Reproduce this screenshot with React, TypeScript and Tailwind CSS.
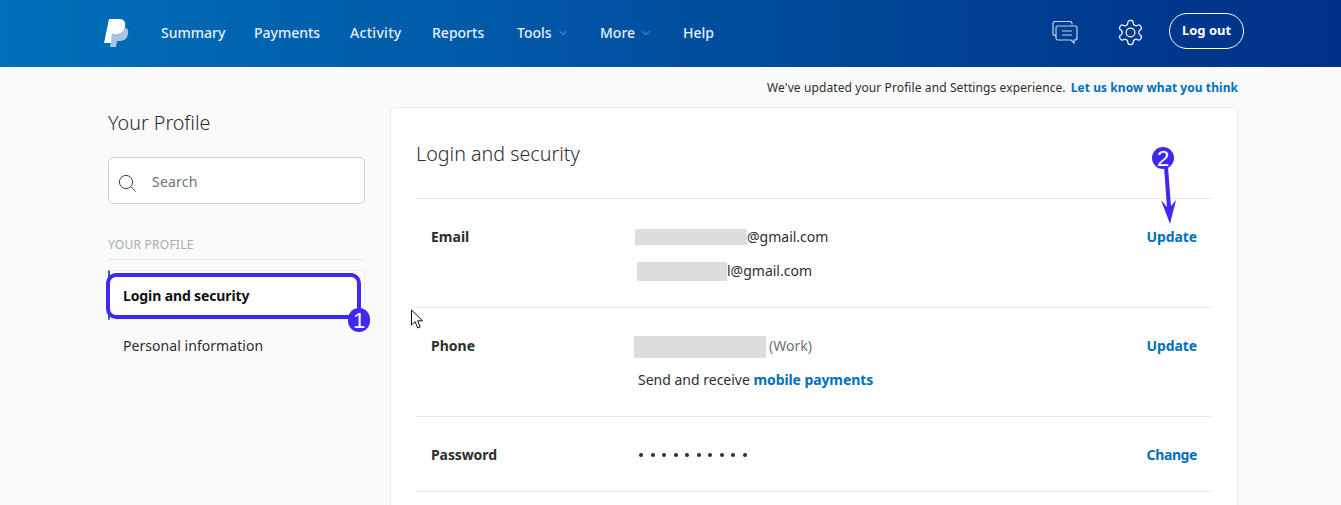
import { ChevronDown } from 'lucide-react';

const font = { fontFamily: '"Noto Sans", "Open Sans", sans-serif' };

function PayPalLogo() {
  return (
    <svg width="25" height="28" viewBox="0 0 25 28" className="shrink-0 mt-[1px]">
      <path d="M9 8h9c5 0 7 3 6 7-1 5-4 7-9 7h-2l-1 6H6z" fill="#a9c4ea" />
      <path d="M5 0h10c5 0 7 3 6 7-1 6-5 8-10 8H8l-1 9H0z" fill="#ffffff" />
    </svg>
  );
}

function NavItem({ label, width, menu, className }: { label: string; width: string; menu?: boolean; className?: string }) {
  return (
    <span className={`flex items-center whitespace-nowrap text-[14px] font-medium text-[#e6eef8] ${width} ${className ?? ''}`}>
      {label}
      {menu && <ChevronDown className="ml-[5px] w-[12px] h-[12px] text-[#a8c4e4]" strokeWidth={1.5} />}
    </span>
  );
}

function BlurBox({ className }: { className: string }) {
  return <span className={`inline-block shrink-0 bg-[#dcdddd] ${className}`} />;
}

export default function App() {
  return (
    <div className="relative h-[505px] overflow-hidden bg-[#fafafa] text-[#2c2e2f]" style={font}>
      <header className="h-[67px] bg-gradient-to-r from-[#0070ba] to-[#002f86] pl-[104px] pr-[97px] pb-[2px] flex items-center">
        <PayPalLogo />
        <nav className="ml-[32px] flex items-center gap-[30px]">
          <NavItem label="Summary" width="w-[63px]" />
          <NavItem label="Payments" width="w-[66px]" />
          <NavItem label="Activity" width="w-[52px]" className="tracking-[0.3px]" />
          <NavItem label="Reports" width="w-[55px]" />
          <NavItem label="Tools" width="w-[53px]" menu />
          <NavItem label="More" width="w-[53px]" menu />
          <NavItem label="Help" width="w-[30px]" />
        </nav>
        <div className="ml-auto flex items-center">
          <svg width="26" height="24" viewBox="0 0 26 24" fill="none" stroke="#c4d5ee" strokeWidth="1.2">
            <path d="M20 3.5V2.5a2 2 0 0 0-2-2H3a2 2 0 0 0-2 2v10a2 2 0 0 0 2 2h1" />
            <path d="M6 5h17a2 2 0 0 1 2 2v10a2 2 0 0 1-2 2h-1v3l-3-3H6a2 2 0 0 1-2-2V7a2 2 0 0 1 2-2z" />
            <path d="M10 10h10M10 14h10" />
          </svg>
          <svg className="ml-[38px]" width="29" height="29" viewBox="0 0 24 24" fill="none" stroke="#ffffff" strokeWidth="1" strokeLinecap="round" strokeLinejoin="round">
            <path d="M12.22 2h-.44a2 2 0 0 0-2 2v.18a2 2 0 0 1-1 1.73l-.43.25a2 2 0 0 1-2 0l-.15-.08a2 2 0 0 0-2.73.73l-.22.38a2 2 0 0 0 .73 2.73l.15.1a2 2 0 0 1 1 1.72v.51a2 2 0 0 1-1 1.74l-.15.09a2 2 0 0 0-.73 2.73l.22.38a2 2 0 0 0 2.73.73l.15-.08a2 2 0 0 1 2 0l.43.25a2 2 0 0 1 1 1.73V20a2 2 0 0 0 2 2h.44a2 2 0 0 0 2-2v-.18a2 2 0 0 1 1-1.73l.43-.25a2 2 0 0 1 2 0l.15.08a2 2 0 0 0 2.73-.73l.22-.39a2 2 0 0 0-.73-2.73l-.15-.08a2 2 0 0 1-1-1.74v-.5a2 2 0 0 1 1-1.74l.15-.09a2 2 0 0 0 .73-2.73l-.22-.38a2 2 0 0 0-2.73-.73l-.15.08a2 2 0 0 1-2 0l-.43-.25a2 2 0 0 1-1-1.73V4a2 2 0 0 0-2-2z" />
            <circle cx="12" cy="12" r="3.6" />
          </svg>
          <span className="ml-[24px] -mt-[3px] w-[75px] h-[36px] rounded-full border border-white flex items-center justify-center text-[13px] font-bold text-white">
            Log out
          </span>
        </div>
      </header>

      <p className="h-[40px] pt-[1px] pr-[103px] flex items-center justify-end text-[12px] tracking-[0.1px] text-[#2c2e2f]">
        We've updated your Profile and Settings experience.
        <span className="ml-[5px] font-bold tracking-[0.06px] text-[#0070ba]">Let us know what you think</span>
      </p>

      <div className="flex items-start pl-[108px] pr-[103px]">
        <aside className="w-[257px] shrink-0">
          <h2 className="mt-[2px] h-[28px] text-[19.7px] font-light leading-[28px] text-[#2c2e2f]">Your Profile</h2>
          <div className="mt-[20px] h-[47px] rounded-[5px] border border-[#cfcfcf] bg-white flex items-center pl-[9px]">
            <svg width="19" height="18" viewBox="0 0 19 18" fill="none" stroke="#33475b" strokeWidth="1" className="mt-[4px]">
              <circle cx="8" cy="8" r="6.6" />
              <path d="M12.8 12.8l5 4.6" />
            </svg>
            <span className="ml-[15px] mt-[1px] text-[14px] tracking-[0.2px] text-[#6c7378]">Search</span>
          </div>
          <div className="mt-[32px] h-[24px] border-b border-[#e8e8e8] text-[12px] tracking-[0.25px] leading-[18px] text-[#a3adb8]">YOUR PROFILE</div>
          <div className="mt-[10px] h-[50px] border border-[#eeeeee] border-l-2 border-l-[#0070ba] bg-white pl-[13px] flex items-center text-[14px] tracking-[-0.12px] font-bold text-[#111111]">
            Login and security
          </div>
          <div className="h-[50px] pl-[15px] flex items-center text-[14px] tracking-[0.05px] text-[#2c2e2f]">Personal information</div>
        </aside>

        <main className="ml-[25px] flex-1 h-[500px] rounded-[5px] border border-[#ececec] bg-white px-[25px]">
          <h1 className="h-[91px] pt-[33px] text-[19.7px] font-light leading-[26px] border-b border-[#e8e8e8] text-[#2c2e2f]">Login and security</h1>

          <div className="h-[109px] border-b border-[#e8e8e8] pl-[15px] pr-[15px] pt-[27px] flex items-start text-[14px]">
            <span className="w-[204px] font-bold leading-[22px]">Email</span>
            <div className="flex-1 -mt-[1px]">
              <div className="h-[22px] flex items-center">
                <BlurBox className="w-[112px] h-[16px] mt-[2px]" />
                @gmail.com
              </div>
              <div className="mt-[12px] h-[22px] pl-[2px] flex items-center">
                <BlurBox className="w-[90px] h-[19px] mt-[2px]" />
                l@gmail.com
              </div>
            </div>
            <span className="font-bold text-[#0070ba] leading-[22px] tracking-[-0.1px]">Update</span>
          </div>

          <div className="h-[109px] border-b border-[#e8e8e8] pl-[15px] pr-[15px] pt-[27px] flex items-start text-[14px]">
            <span className="w-[203px] font-bold leading-[22px]">Phone</span>
            <div className="flex-1 -mt-[1px]">
              <div className="h-[22px] flex items-center">
                <BlurBox className="w-[132px] h-[22px] mt-[4px]" />
                <span className="ml-[3px] text-[#6c7378]">(Work)</span>
              </div>
              <div className="mt-[13px] h-[22px] pl-[4px]">
                Send and receive <span className="font-bold tracking-[-0.1px] text-[#0070ba]">mobile payments</span>
              </div>
            </div>
            <span className="font-bold text-[#0070ba] leading-[22px] tracking-[-0.1px]">Update</span>
          </div>

          <div className="h-[75px] border-b border-[#e8e8e8] pl-[15px] pr-[15px] pt-[27px] flex items-start text-[14px]">
            <span className="w-[208px] font-bold leading-[22px] tracking-[-0.1px]">Password</span>
            <div className="flex-1 h-[22px] flex items-center gap-[7.5px]">
              {Array.from({ length: 10 }).map((_, i) => (
                <span key={i} className="w-[4px] h-[4px] rounded-full bg-[#2c2e2f]" />
              ))}
            </div>
            <span className="font-bold text-[#0070ba] leading-[22px] tracking-[-0.4px]">Change</span>
          </div>
        </main>
      </div>

      {/* screenshot annotations drawn on top of the page */}
      <div className="absolute left-[106px] top-[273px] w-[255px] h-[46px] rounded-[10px] border-[4px] border-[#3f28f0]" />
      <span className="absolute left-[348px] top-[308px] w-[22px] h-[24px] rounded-full bg-[#3f28f0] text-white text-[22px] leading-[25px] text-center" style={{ fontFamily: '"Liberation Sans", sans-serif' }}>1</span>
      <svg className="absolute left-[1155px] top-[165px]" width="24" height="60" viewBox="0 0 24 60" fill="#3f28f0">
        <path d="M9 2L13 2L16 41L21 35L15 59L6 35L12 42Z" />
      </svg>
      <span className="absolute left-[1152px] top-[147px] w-[22px] h-[22px] rounded-full bg-[#3f28f0] text-white text-[22px] leading-[23px] text-center" style={{ fontFamily: '"Liberation Sans", sans-serif' }}>2</span>
      <svg className="absolute left-[410px] top-[309px]" width="14" height="22" viewBox="0 0 14 22" fill="#ffffff" stroke="#111111" strokeWidth="1">
        <path d="M1.5 1v15l3.6-3.4 2.6 6.4 2.5-1-2.6-6.2h5z" />
      </svg>
    </div>
  );
}
